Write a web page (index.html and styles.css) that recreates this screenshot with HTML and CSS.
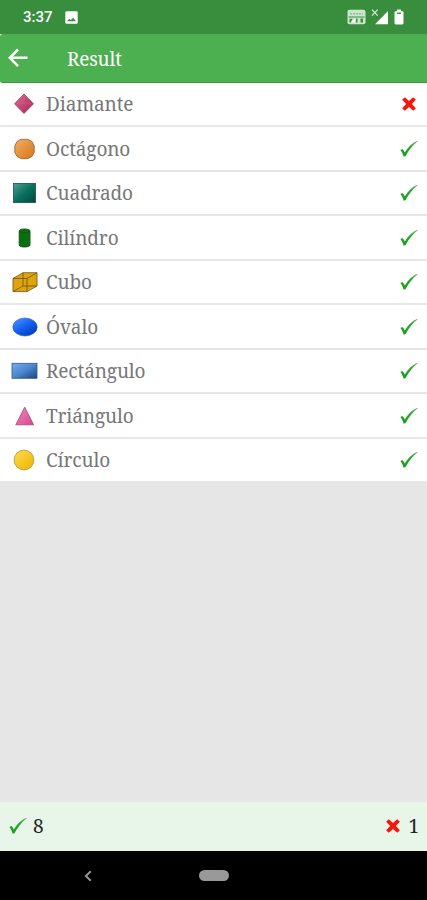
FILE: index.html
```
<!DOCTYPE html>
<html lang="es">
<head>
  <meta charset="UTF-8">
  <meta name="viewport" content="width=device-width, initial-scale=1.0">
  <title>Result</title>
  <link rel="stylesheet" href="styles.css">
</head>
<body>
  <!-- Shared icons and gradients -->
  <svg class="defs" width="0" height="0">
    <defs>
      <linearGradient id="pink" x1="0" y1="0" x2="1" y2="1"><stop offset="0" stop-color="#e0709a"/><stop offset="1" stop-color="#a82050"/></linearGradient>
      <linearGradient id="orange" x1="0" y1="0" x2="1" y2="1"><stop offset="0" stop-color="#f4ae63"/><stop offset="1" stop-color="#d87514"/></linearGradient>
      <linearGradient id="teal" x1="0" y1="0" x2="1" y2="1"><stop offset="0" stop-color="#4fa292"/><stop offset=".5" stop-color="#08705f"/><stop offset="1" stop-color="#00483e"/></linearGradient>
      <linearGradient id="blue" x1="0" y1="0" x2=".8" y2="1"><stop offset="0" stop-color="#5599ff"/><stop offset=".5" stop-color="#1763f2"/><stop offset="1" stop-color="#0038bd"/></linearGradient>
      <linearGradient id="sky" x1="0" y1="0" x2="1" y2="1"><stop offset="0" stop-color="#76adea"/><stop offset=".5" stop-color="#4c87cc"/><stop offset="1" stop-color="#17437f"/></linearGradient>
      <linearGradient id="rose" x1="0" y1="0" x2="1" y2="1"><stop offset="0" stop-color="#f18abd"/><stop offset="1" stop-color="#db4391"/></linearGradient>
      <linearGradient id="yellow" x1="0" y1="0" x2="1" y2="1"><stop offset="0" stop-color="#ffdc4c"/><stop offset="1" stop-color="#ecb400"/></linearGradient>
      <linearGradient id="tick" x1="0" y1="1" x2="1" y2="0"><stop offset="0" stop-color="#149c18"/><stop offset=".6" stop-color="#28a92c"/><stop offset="1" stop-color="#7bb37d"/></linearGradient>
    </defs>
    <symbol id="check" viewBox="0 0 18 18">
      <path d="M.4 10 2.3 8.9C3.4 9.9 4.1 11 4.8 12.4 8 7.4 12 3.1 17.3.8L17.6 1.6C13 5.1 9 9.9 5.6 15.9L3.7 16.8C3 14.2 2 11.9.4 10Z" fill="url(#tick)"/>
    </symbol>
    <symbol id="cross" viewBox="0 0 14 14">
      <path d="M2.9.2 7 4.1 11.1.2 13.9 2.7 9.8 6.9 13.9 11.3 11.2 13.8 7 9.9 2.8 13.8.1 11.3 4.2 6.9.1 2.7Z" fill="#f5160c"/>
    </symbol>
  </svg>

  <div class="screen">
    <!-- Status bar -->
    <div class="status-bar">
      <span class="clock">3:37</span>
      <svg class="photo-icon" width="13" height="13" viewBox="0 0 13 13"><rect x=".3" y=".3" width="12.4" height="12.4" rx="1.3" fill="#fff"/><path d="M2 10.3 4.3 7.7 5.9 9 8.2 6.7 11 10.3Z" fill="#388e3c"/></svg>
      <div class="status-icons">
        <svg width="19" height="16" viewBox="0 0 19 16">
          <rect x=".5" y=".8" width="18" height="14.4" rx="2" fill="#cce5cd"/>
          <path d="M3 4.8H16" stroke="#8fc091" stroke-width="1.6" stroke-dasharray="2 1"/>
          <path d="M1.5 8H17.5" stroke="#388e3c"/>
          <path d="M2.5 13.5V9.7H5.5L3.8 13.5ZM8.8 13.5V9.5H10.5V13.5ZM13.5 9.5H16V13.5H13.5Z" fill="#388e3c"/>
          <path d="M4 13.2 8.5 9V13.2Z" fill="#fff"/>
        </svg>
        <svg width="18" height="17" viewBox="0 0 18 17">
          <path d="M1 .6 6.6 6.6M6.6 .6 1 6.6" stroke="#d3ead4" stroke-width="1.3"/>
          <path d="M17 2V15.3H4Z" fill="#fff"/>
        </svg>
        <svg width="10" height="16" viewBox="0 0 10 16">
          <path d="M3 .6H7V2.2H8.3Q9.5 2.2 9.5 3.5V14Q9.5 15.4 8.2 15.4H1.8Q.5 15.4.5 14V3.5Q.5 2.2 1.7 2.2H3Z" fill="#fff"/>
          <path d="M3 4.2H7" stroke="#388e3c" stroke-width="1.4"/>
        </svg>
      </div>
    </div>

    <!-- App bar -->
    <header class="app-bar">
      <svg width="20" height="20" viewBox="0 0 20 20"><path d="M10 1.5 1.8 9.8 10 18.2M2 9.8H19.5" fill="none" stroke="#fff" stroke-width="2.5"/></svg>
      <h1>Result</h1>
    </header>

    <!-- Answers -->
    <ul class="result-list">
      <li class="result-item">
        <svg class="shape" viewBox="0 0 28 24"><path d="M14 2 23.5 11.8 14 21.5 4.5 11.8Z" fill="url(#pink)" stroke="#963153" stroke-width=".7"/><path d="M14 2.5V11L23 11.8M14 11 5 11.8" stroke="#d45b83" stroke-width=".6" fill="none"/></svg>
        <span class="name">Diamante</span>
        <svg class="cross"><use href="#cross"/></svg>
      </li>
      <li class="result-item">
        <svg class="shape" viewBox="0 0 28 24"><path d="M11.2 2.3H17.8L22 4.5 24.2 8.8V15.2L22 19.4 17.8 21.7H11.2L7 19.4 4.8 15.2V8.8L7 4.5Z" fill="url(#orange)" stroke="#8b6336" stroke-width=".8" stroke-linejoin="round"/></svg>
        <span class="name">Octágono</span>
        <svg class="check"><use href="#check"/></svg>
      </li>
      <li class="result-item">
        <svg class="shape" viewBox="0 0 28 24"><rect x="3.5" y="2.4" width="22" height="19.2" fill="url(#teal)" stroke="#155548" stroke-width=".8"/></svg>
        <span class="name">Cuadrado</span>
        <svg class="check"><use href="#check"/></svg>
      </li>
      <li class="result-item">
        <svg class="shape" viewBox="0 0 28 24"><path d="M9.2 5C9.2 2.3 20 2.3 20 5V19C20 21.7 9.2 21.7 9.2 19Z" fill="#08710d" stroke="#174d19" stroke-width=".9"/><path d="M9.5 5.2C10.5 7.3 18.7 7.3 19.7 5.2" fill="none" stroke="#075109" stroke-width=".8"/></svg>
        <span class="name">Cilíndro</span>
        <svg class="check"><use href="#check"/></svg>
      </li>
      <li class="result-item">
        <svg class="shape" viewBox="0 0 28 24"><path d="M3 8.5 13 2.7H27V16L17 21.6H3Z" fill="#dda50b"/><path d="M3 8.5 13 2.7H27V16L17 21.6H3ZM3 8.5H17V21.6M17 8.5 27 2.7M13 2.7V16H27M13 16 3 21.6" fill="none" stroke="#705010" stroke-width=".8"/></svg>
        <span class="name">Cubo</span>
        <svg class="check"><use href="#check"/></svg>
      </li>
      <li class="result-item">
        <svg class="shape" viewBox="0 0 28 24"><ellipse cx="15" cy="12" rx="12.2" ry="9" fill="url(#blue)" stroke="#2458af" stroke-width=".6"/></svg>
        <span class="name">Óvalo</span>
        <svg class="check"><use href="#check"/></svg>
      </li>
      <li class="result-item">
        <svg class="shape" viewBox="0 0 28 24"><rect x="2" y="4.3" width="25" height="15" fill="url(#sky)" stroke="#315a8c" stroke-width=".8"/></svg>
        <span class="name">Rectángulo</span>
        <svg class="check"><use href="#check"/></svg>
      </li>
      <li class="result-item">
        <svg class="shape" viewBox="0 0 28 24"><path d="M14.7 3.2 23.6 20.8H5.8Z" fill="url(#rose)" stroke="#9d4770" stroke-width=".8"/></svg>
        <span class="name">Triángulo</span>
        <svg class="check"><use href="#check"/></svg>
      </li>
      <li class="result-item">
        <svg class="shape" viewBox="0 0 28 24"><circle cx="14" cy="12" r="9.9" fill="url(#yellow)" stroke="#a58a32" stroke-width=".7"/></svg>
        <span class="name">Círculo</span>
        <svg class="check"><use href="#check"/></svg>
      </li>
    </ul>

    <!-- Totals -->
    <footer class="totals">
      <div class="total"><svg class="check"><use href="#check"/></svg><span>8</span></div>
      <div class="total wrong"><svg class="cross"><use href="#cross"/></svg><span>1</span></div>
    </footer>

    <!-- System navigation -->
    <nav class="system-nav">
      <svg width="8" height="12" viewBox="0 0 8 12"><path d="M6.8 1.2 1.8 6 6.8 10.8" fill="none" stroke="#999" stroke-width="1.9"/></svg>
      <span class="home-pill"></span>
    </nav>
  </div>
</body>
</html>
```
FILE: styles.css
```
/* General Styles */
* {
  box-sizing: border-box;
}

body {
  margin: 0;
  background: #e6e6e6;
  font-family: "Noto Serif", "Droid Serif", "DejaVu Serif Condensed", "DejaVu Serif", serif;
}

svg {
  display: block;
  flex-shrink: 0;
}

.defs {
  position: absolute;
}

.screen {
  display: flex;
  flex-direction: column;
  width: 427px;
  height: 900px;
  overflow: hidden;
}

/* Status bar */
.status-bar {
  display: flex;
  align-items: center;
  height: 34px;
  padding: 0 22px 0 23px;
  background: #388e3c;
}

.clock {
  width: 42px;
  color: #fff;
  font: 500 15px/36px Roboto, sans-serif;
}

.status-icons {
  display: flex;
  align-items: center;
  gap: 5px;
  margin-left: auto;
  margin-right: 1px;
}

/* App bar */
.app-bar {
  display: flex;
  align-items: center;
  height: 49px;
  padding-left: 8px;
  background: #4caf50;
  border-bottom: 1px solid #389b3c;
  border-radius: 3px 0 0 3px;
}

.app-bar h1 {
  margin: 1px 0 0 39px;
  color: #fff;
  font-size: 19px;
  font-weight: normal;
  letter-spacing: -0.2px;
}

/* Answers */
.result-list {
  display: flex;
  flex-direction: column;
  gap: 2.2px;
  margin: 0;
  padding: 0;
  list-style: none;
}

.result-item {
  display: flex;
  align-items: center;
  height: 42.3px;
  padding: 0 9px 0 10px;
  background: #fff;
}

.shape {
  width: 28px;
  height: 24px;
}

.name {
  flex: 1;
  margin-left: 8px;
  color: #777;
  font-size: 19px;
  line-height: 26px;
  letter-spacing: -0.13px;
}

.check {
  width: 18px;
  height: 18px;
}

.cross {
  width: 14px;
  height: 14px;
}

.result-item .cross {
  margin-right: 2px;
}

/* Totals */
.totals {
  display: flex;
  justify-content: space-between;
  align-items: center;
  height: 49px;
  margin-top: auto;
  padding: 0 8px 2px 9px;
  background: #e8f5e9;
  font-size: 19px;
  color: #222;
}

.total {
  display: flex;
  align-items: center;
  gap: 6px;
}

.total.wrong {
  gap: 8px;
}

/* System navigation */
.system-nav {
  display: flex;
  align-items: center;
  height: 49px;
  padding-left: 84px;
  background: #000;
}

.home-pill {
  width: 30px;
  height: 11px;
  margin-left: 107px;
  background: #999;
  border-radius: 6px;
}
```
